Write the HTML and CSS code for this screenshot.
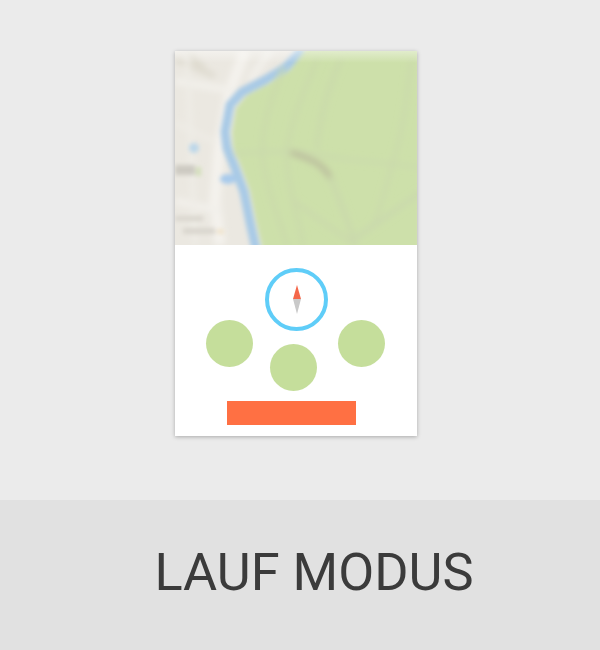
FILE: index.html
```html
<!DOCTYPE html>
<html lang="de">
<head>
<meta charset="utf-8">
<title>Lauf Modus</title>
<link rel="stylesheet" href="styles.css">
</head>
<body>
<main class="hero">
  <section class="card">
    <svg class="map" width="242" height="194" viewBox="0 0 242 194" aria-hidden="true">
      <defs>
        <filter id="blur" x="-10%" y="-10%" width="120%" height="120%"><feGaussianBlur stdDeviation="2.2"/></filter>
        <filter id="blur-land" x="-10%" y="-10%" width="120%" height="120%"><feGaussianBlur stdDeviation="3.4"/></filter>
        <filter id="blur-soft" x="-10%" y="-10%" width="120%" height="120%"><feGaussianBlur stdDeviation="3"/></filter>
        <linearGradient id="top-shade" x1="0" y1="0" x2="0" y2="1">
          <stop offset="0" stop-color="#ffffff" stop-opacity=".4"/>
          <stop offset="1" stop-color="#ffffff" stop-opacity="0"/>
        </linearGradient>
        <clipPath id="map-clip"><rect width="242" height="194"/></clipPath>
      </defs>
      <g clip-path="url(#map-clip)">
        <rect width="242" height="194" fill="#ebe8e1"/>
        <g filter="url(#blur-land)">
          <path d="M0 8 L40 25 M10 0 L30 18" stroke="#dfdbd0" stroke-width="6" fill="none"/>
          <path d="M70 0 L55 40 L44 100 L40 150 L45 194" stroke="#f4f2ed" stroke-width="11" fill="none"/>
          <path d="M0 30 L60 40 M0 150 L45 160 M95 0 L75 30" stroke="#f2f0eb" stroke-width="7" fill="none"/>
          <path d="M0 72 L42 92 M12 0 L20 194" stroke="#efede7" stroke-width="4" fill="none"/>
        </g>
        <g filter="url(#blur)">
          <rect x="0" y="114" width="20" height="10" fill="#cdcac2"/>
          <rect x="0" y="165" width="28" height="5" fill="#d9d6ce"/>
          <rect x="8" y="177" width="32" height="6" fill="#d9d6ce"/>
          <rect x="42" y="178" width="7" height="5" fill="#f0e3cc"/>
          <rect x="21" y="116" width="5" height="9" fill="#d3dfba"/>
          <circle cx="19" cy="97" r="5" fill="#bcd7ea"/>
          <ellipse cx="53" cy="128" rx="8" ry="5" fill="#a9cbec"/>
          <path d="M128 -2 L110 17 L90 29 L67 41 L55 54 L50 81 L52 97 L60 117 L69 141 L75 171 L81 198" stroke="#a9cae6" stroke-width="9" fill="none" stroke-linejoin="round"/>
          <path d="M133 -5 L115 19 L95 32 L72 44 L61 57 L57 81 L58 96 L66 116 L75 140 L81 170 L88 200 L245 200 L245 -5 Z" fill="#cde0aa"/>
        </g>
        <g filter="url(#blur-soft)" fill="none" stroke-linecap="round">
          <path d="M142 8 C130 40 115 70 112 100 C110 130 125 170 128 194" stroke="#cadaab" stroke-width="4"/>
          <path d="M108 18 C95 50 85 80 88 110 C92 140 105 170 112 194" stroke="#cadaab" stroke-width="4"/>
          <path d="M165 10 C150 45 145 70 142 96" stroke="#cadaab" stroke-width="5"/>
          <path d="M236 10 C232 50 225 90 218 112 C210 140 205 160 200 170" stroke="#cbdaac" stroke-width="4"/>
          <path d="M60 102 L120 100 L170 108 L245 116" stroke="#cad9ad" stroke-width="3"/>
          <path d="M118 102 C135 108 148 112 156 128" stroke="#bcbf9e" stroke-width="6"/>
          <path d="M156 128 C165 150 175 175 180 194" stroke="#cad9ac" stroke-width="5"/>
          <path d="M175 190 C200 175 225 155 245 142" stroke="#cad9ad" stroke-width="5"/>
          <path d="M118 150 C140 165 160 180 175 190" stroke="#cbd9ac" stroke-width="4"/>
        </g>
        <rect width="242" height="12" fill="url(#top-shade)"/>
      </g>
    </svg>
    <div class="controls">
      <div class="dials">
        <div class="side"><span class="dot"></span></div>
        <div class="centre">
          <div class="compass">
            <svg width="12" height="30" viewBox="0 0 12 30" aria-hidden="true">
              <path d="M6 0 L2 14 L10 14 Z" fill="#f4674a"/>
              <path d="M2 14 L10 14 L6 29 Z" fill="#c9c9c9"/>
            </svg>
          </div>
          <span class="dot dot-centre"></span>
        </div>
        <div class="side"><span class="dot"></span></div>
      </div>
      <div class="action"></div>
    </div>
  </section>
</main>
<footer class="caption">
  <h1 class="title">LAUF MODUS</h1>
</footer>
</body>
</html>
```

FILE: styles.css
```css
* {
  box-sizing: border-box;
}

html,
body {
  margin: 0;
  padding: 0;
}

body {
  width: 600px;
  height: 650px;
  overflow: hidden;
  background: #ebebeb;
  font-family: Roboto, "Liberation Sans", sans-serif;
}

.hero {
  height: 500px;
  padding: 51px 0 0 175px;
  background: #ebebeb;
}

.card {
  width: 242px;
  height: 385px;
  background: #ffffff;
  box-shadow: 0 1px 4px rgba(0, 0, 0, 0.28);
}

.map {
  display: block;
}

.controls {
  padding-top: 23px;
}

.dials {
  display: flex;
  margin-left: 31px;
  height: 133px;
}

.side {
  width: 47px;
  padding-top: 52px;
}

.centre {
  width: 63px;
  margin: 0 10px 0 12px;
}

.dot {
  display: block;
  width: 47px;
  height: 47px;
  border-radius: 50%;
  background: #c5de9b;
}

.dot-centre {
  margin: 13px 0 0 5px;
}

.compass {
  display: flex;
  align-items: center;
  justify-content: center;
  width: 63px;
  height: 63px;
  border: 4px solid #5fcdf8;
  border-radius: 50%;
}

.compass svg {
  display: block;
  margin-top: 1px;
}

.action {
  width: 129px;
  height: 24px;
  margin-left: 52px;
  background: #ff7043;
}

.caption {
  display: flex;
  justify-content: center;
  align-items: center;
  height: 150px;
  padding: 0 0 7px 28px;
  background: #e1e1e1;
}

.title {
  margin: 0;
  font-size: 52.3px;
  font-weight: 400;
  line-height: 60px;
  color: #3b3b3b;
}
```
